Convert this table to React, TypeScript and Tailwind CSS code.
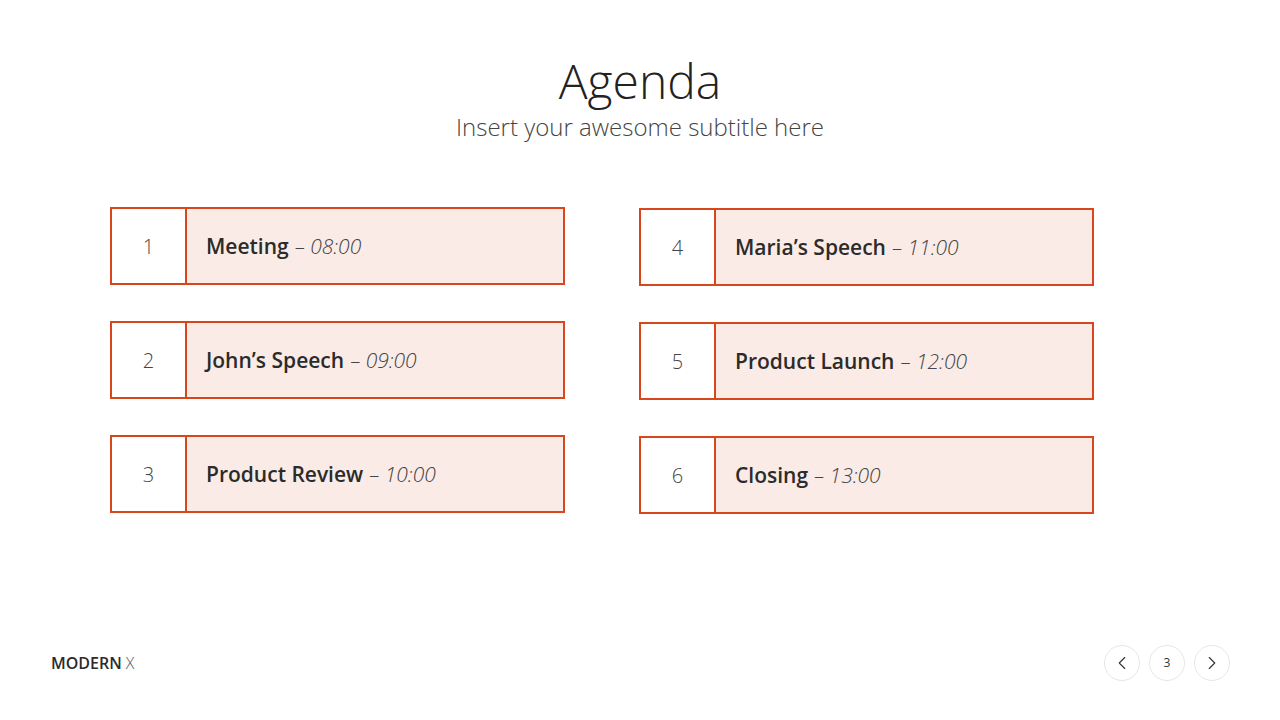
import React from "react";
import { ChevronLeft, ChevronRight } from "lucide-react";

interface AgendaItem {
  num: number;
  title: string;
  time: string;
}

const left: AgendaItem[] = [
  { num: 1, title: "Meeting", time: "08:00" },
  { num: 2, title: "John’s Speech", time: "09:00" },
  { num: 3, title: "Product Review", time: "10:00" },
];

const right: AgendaItem[] = [
  { num: 4, title: "Maria’s Speech", time: "11:00" },
  { num: 5, title: "Product Launch", time: "12:00" },
  { num: 6, title: "Closing", time: "13:00" },
];

function AgendaRow({ item }: { item: AgendaItem }) {
  return (
    <div className="flex h-[78px] w-[455px] border-2 border-[#d8461b]">
      <div className="flex w-[75px] shrink-0 items-center justify-center border-r-2 border-[#d8461b] bg-white pt-[1px] text-[20px] font-light text-[#444]">
        {item.num}
      </div>
      <div className="flex flex-1 items-center bg-[#fbebe7] pl-[19px] pt-[2px] text-[21px] text-[#2b2b2b]">
        <span className="font-semibold">{item.title}</span>
        <span className="ml-[6px] font-light italic text-[#444]">– {item.time}</span>
      </div>
    </div>
  );
}

export default function App() {
  return (
    <div
      className="flex h-[720px] w-[1280px] flex-col bg-white"
      style={{ fontFamily: '"Open Sans", sans-serif' }}
    >
      {/* Header */}
      <div className="mt-[52px] flex flex-col items-center">
        <h1 className="text-[48px] font-light leading-[58px] text-[#222]">Agenda</h1>
        <p className="mt-[2px] text-[24px] font-light leading-[29px] text-[#444]">
          Insert your awesome subtitle here
        </p>
      </div>

      {/* Agenda grid */}
      <div className="mt-[66px] flex gap-[74px] pl-[110px]">
        <div className="flex flex-col gap-[36px]">
          {left.map((it) => (
            <AgendaRow key={it.num} item={it} />
          ))}
        </div>
        <div className="mt-[1px] flex flex-col gap-[36px]">
          {right.map((it) => (
            <AgendaRow key={it.num} item={it} />
          ))}
        </div>
      </div>

      {/* Footer */}
      <div className="mt-auto mb-[39px] flex items-center justify-between pl-[51px] pr-[50px]">
        <div className="text-[16px] leading-[24px] text-[#2b2b2b]">
          <span className="font-semibold">MODERN</span>
          <span className="ml-[4px] font-light text-[#555]">X</span>
        </div>
        <div className="flex items-center gap-[9px]">
          <button className="flex h-[36px] w-[36px] items-center justify-center rounded-full border border-[#e6e6e6] text-[#333]">
            <ChevronLeft size={22} strokeWidth={1.2} />
          </button>
          <button className="flex h-[36px] w-[36px] items-center justify-center rounded-full border border-[#e6e6e6] text-[12px] text-[#333]">
            3
          </button>
          <button className="flex h-[36px] w-[36px] items-center justify-center rounded-full border border-[#e6e6e6] text-[#333]">
            <ChevronRight size={22} strokeWidth={1.2} />
          </button>
        </div>
      </div>
    </div>
  );
}
